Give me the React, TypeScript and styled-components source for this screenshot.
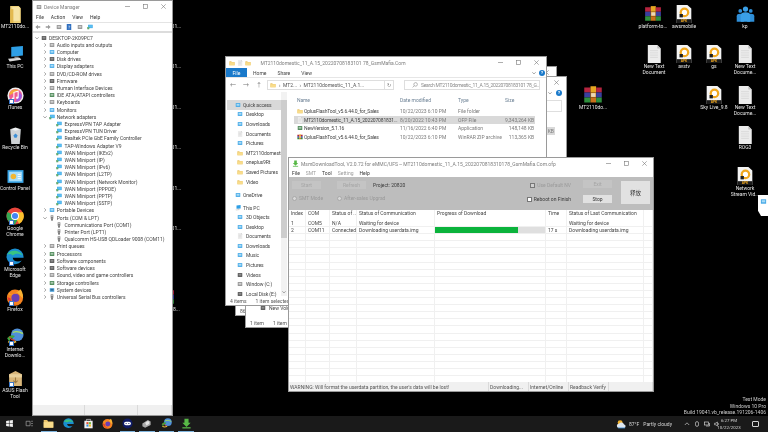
import React from "react";
import styled, { createGlobalStyle } from "styled-components";

const Global = createGlobalStyle`
  html, body { margin: 0; padding: 0; background: #000; }
  #root { width: 768px; height: 432px; overflow: hidden; }
  * { box-sizing: border-box; }
`;

const FONT = `Roboto, "Noto Sans CJK SC", Arial, sans-serif`;

const Desktop = styled.div`
  position: relative;
  width: 768px;
  height: 432px;
  background: #000;
  overflow: hidden;
  font-family: ${FONT};
  font-size: 5px;
  line-height: 6px;
  color: #3a3a3a;
  filter: blur(0.42px);
`;

/* ---------- icons ---------- */
type P = { s?: number };
const Svg: React.FC<React.PropsWithChildren<P>> = ({ s = 16, children }) => (
  <svg width={s} height={s} viewBox="0 0 16 16" style={{ display: "block", flex: "none" }}>{children}</svg>
);
const Folder = ({ s }: P) => (
  <Svg s={s}><path d="M1 3h5l1.5 2H15v9H1z" fill="#e9c46a" /><path d="M1 6h14v8H1z" fill="#f8dc8b" /></Svg>
);
const TallFolder = ({ s }: P) => (
  <Svg s={s}><path d="M3 0h8l2 2v14H3z" fill="#efd27a" /><path d="M5 1h7v13H5z" fill="#f6e3a4" /><path d="M3 3h3v13H3z" fill="#e3b94f" /></Svg>
);
const Doc = ({ s }: P) => (
  <Svg s={s}><path d="M2.5 0H11l3 3v13H2.5z" fill="#ececec" /><path d="M11 0v3h3z" fill="#bdbdbd" /><path d="M4.5 5h7M4.5 7h7M4.5 9h7M4.5 11h7" stroke="#d2d2d2" strokeWidth=".6" /></Svg>
);
const Apk = ({ s }: P) => (
  <Svg s={s}>
    <path d="M1.5 0H11l3.5 3v13H1.5z" fill="#f4f4f4" />
    <rect x="1.5" y="12.6" width="13" height="3.4" fill="#1b1b1b" />
    <text x="8" y="15.4" fontSize="2.8" fontWeight="700" fill="#f2a81d" textAnchor="middle" fontFamily="Liberation Sans">APK</text>
    <circle cx="8.4" cy="6.6" r="4.3" fill="#f2a81d" />
    <circle cx="8.4" cy="6.6" r="2.3" fill="#fff" />
    <rect x="4" y="8" width="3" height="3" fill="#222" />
  </Svg>
);
const Rar = ({ s }: P) => (
  <Svg s={s}>
    <rect x="1" y="2" width="5" height="4" fill="#b5243f" /><rect x="6" y="1" width="4.5" height="5" fill="#e6a722" /><rect x="10.5" y="2" width="4.5" height="4" fill="#b5243f" />
    <rect x="1" y="6" width="5" height="4" fill="#3a3f9e" /><rect x="6" y="6" width="4.5" height="4" fill="#e08a20" /><rect x="10.5" y="6" width="4.5" height="4" fill="#3a3f9e" />
    <rect x="1" y="10" width="5" height="4" fill="#2f8f3d" /><rect x="6" y="10" width="4.5" height="4" fill="#c9701a" /><rect x="10.5" y="10" width="4.5" height="4" fill="#2f8f3d" />
    <rect x="6.5" y="6.5" width="3.5" height="3" fill="#e8d9b8" />
  </Svg>
);
const People = ({ s }: P) => (
  <Svg s={s}>
    <circle cx="3.6" cy="5" r="1.6" fill="#2f8fd8" /><circle cx="12.4" cy="5" r="1.6" fill="#2f8fd8" /><circle cx="8" cy="3.4" r="2.2" fill="#3aa0e8" />
    <path d="M.6 14V9.4q0-2 3-2t3 2V14z" fill="#2f8fd8" /><path d="M9.4 14V9.4q0-2 3-2t3 2V14z" fill="#2f8fd8" /><path d="M4 14V8.6q0-2.5 4-2.5t4 2.5V14z" fill="#3aa0e8" />
  </Svg>
);
const ThisPc = ({ s }: P) => (
  <Svg s={s}><path d="M4 1l11-1v9L4 10z" fill="#2e9fe6" /><path d="M1 12l11-1 1.5 2-11 1.5z" fill="#d9d9d9" /><path d="M7 10h4v1.2H7z" fill="#9a9a9a" /></Svg>
);
const Shortcut = styled.span`
  position: absolute;
  left: 3px;
  top: 13px;
  width: 5px;
  height: 5px;
  background: #fff;
  border: 1px solid #3c78c8;
`;
const ITunes = ({ s }: P) => (
  <Svg s={s}><circle cx="8" cy="8" r="7.6" fill="#f0f0f0" /><circle cx="8" cy="8" r="6.2" fill="#ef5d92" /><path d="M2 8a6 6 0 0 1 6-6l3 1z" fill="#f4a93b" /><path d="M8 14a6 6 0 0 0 6-6l-2-3z" fill="#9c5be0" /><path d="M6.5 11V5l4-1v6" stroke="#fff" strokeWidth="1" fill="none" /><circle cx="5.6" cy="11" r="1.1" fill="#fff" /><circle cx="9.6" cy="10" r="1.1" fill="#fff" /></Svg>
);
const Bin = ({ s }: P) => (
  <Svg s={s}><path d="M3 2h10l-1 14H4z" fill="#cfd3d6" /><path d="M3 2l5 1.5L13 2 8 .5z" fill="#eef0f1" /><path d="M6 8l2-2 2 2-1 2H7z" fill="#3d8fd6" /></Svg>
);
const Panel = ({ s }: P) => (
  <Svg s={s}><rect x=".5" y="2" width="15" height="12" fill="#3aa6e8" /><rect x="2" y="3.5" width="12" height="9" fill="#a6dcf7" /><circle cx="6" cy="8" r="2.6" fill="#f2b630" /><path d="M10 6h3M10 8h3M10 10h3" stroke="#fff" strokeWidth=".8" /></Svg>
);
const Chrome = ({ s }: P) => (
  <Svg s={s}><circle cx="8" cy="8" r="7.6" fill="#e8453c" /><path d="M8 8L1.4 4.4A7.6 7.6 0 0 0 8 15.6L11.5 9z" fill="#34a853" /><path d="M8 8l3.6 7A7.6 7.6 0 0 0 15 4.6H8z" fill="#fbc02d" /><circle cx="8" cy="8" r="3.5" fill="#fff" /><circle cx="8" cy="8" r="2.7" fill="#4285f4" /></Svg>
);
const Edge = ({ s }: P) => (
  <Svg s={s}><path d="M8 .4a7.6 7.6 0 0 1 7.6 8.2H6c0 2.8 4 4.4 8 2.6a7.6 7.6 0 0 1-13.6-3A7.6 7.6 0 0 1 8 .4z" fill="#1a8fd0" /><path d="M1 6C2.5 1.5 12 .6 14.8 6.6c-3-2-7-2-8.6 0C4 5 2.5 5 1 6z" fill="#39c481" /></Svg>
);
const Firefox = ({ s }: P) => (
  <Svg s={s}><circle cx="8" cy="8.6" r="7.2" fill="#f5821f" /><path d="M2 4c1 4 4 1 6 1l5-4c2 3 2.5 6 1.8 8L10 4 6 7z" fill="#f9b233" /><circle cx="8.4" cy="8.8" r="3.6" fill="#6a3fb5" /><path d="M1 8q2 7 8 7-5-2-5-6z" fill="#e6382f" /></Svg>
);
const Idm = ({ s }: P) => (
  <Svg s={s}><circle cx="10" cy="6" r="5.6" fill="#4f8fd8" /><path d="M6 4q4-2 9 1" stroke="#a8e060" strokeWidth="1.2" fill="none" /><path d="M1 9q3-4 7-2L6 9q-2-.4-3 3z" fill="#3ca63c" /><path d="M2 12q3 2 7 0" stroke="#e6b93a" strokeWidth="1.6" fill="none" /><path d="M3 8q2 3 5 3" stroke="#d83a2e" strokeWidth="1" fill="none" /></Svg>
);
const Box = ({ s }: P) => (
  <Svg s={s}><path d="M2 4l6-3 6 3v11H2z" fill="#d9b67a" /><path d="M2 4h12v3H2z" fill="#e9d09c" /><path d="M8 7v5M6 10l2 2 2-2" stroke="#9a7a44" strokeWidth="1" fill="none" /></Svg>
);
const GreenDown = ({ s }: P) => (
  <Svg s={s}><path d="M5 1h6v6h3l-6 6-6-6h3z" fill="#58b947" /><rect x="2" y="13.4" width="12" height="1.8" fill="#58b947" /></Svg>
);
const Win = ({ s }: P) => (
  <Svg s={s}><path d="M2 3.6l5-.8v4.7H2zM8 2.6l6-.9v5.8H8zM2 8.5h5v4.7l-5-.8zM8 8.5h6v5.8l-6-.9z" fill="#f2f2f2" /></Svg>
);
const TaskView = ({ s }: P) => (
  <Svg s={s}><path d="M2 4h7v8H2zM11 4h3M11 8h3M11 12h3" stroke="#b5b5b5" fill="none" strokeWidth="1.1" /></Svg>
);
const Store = ({ s }: P) => (
  <Svg s={s}><path d="M2 4h12v11H2z" fill="#f0f0f0" /><path d="M5 4V2h6v2" stroke="#ddd" fill="none" /><rect x="5" y="6" width="3" height="3" fill="#e6492e" /><rect x="8.5" y="6" width="3" height="3" fill="#6fb83a" /><rect x="5" y="9.5" width="3" height="3" fill="#2c8fe0" /><rect x="8.5" y="9.5" width="3" height="3" fill="#f4b81e" /></Svg>
);
const Chat = ({ s }: P) => (
  <Svg s={s}><circle cx="8" cy="8" r="7.4" fill="#101c66" /><rect x="3" y="5.4" width="10" height="5.2" rx="2.6" fill="#fff" /><circle cx="6" cy="8" r=".9" fill="#101c66" /><circle cx="10" cy="8" r=".9" fill="#101c66" /></Svg>
);
const Flash = ({ s }: P) => (
  <Svg s={s}><path d="M2 8l8-5 4 2v5l-8 4-4-2z" fill="#a9a9a9" /><path d="M6 7l4-2.5 2 1v3L8 11z" fill="#e5e5e5" /></Svg>
);
const Weather = ({ s }: P) => (
  <Svg s={s}><circle cx="6" cy="5.5" r="3.6" fill="#f3b32d" /><path d="M4 13a3 3 0 0 1 .4-6 4 4 0 0 1 7.4 1 2.6 2.6 0 0 1 .4 5z" fill="#dfe6ee" /><path d="M3 13h10" stroke="#3d8fd6" strokeWidth="1.2" /></Svg>
);
const Mon = ({ s }: P) => (
  <Svg s={s}><rect x="3" y="2" width="12" height="9" fill="#2f9fe2" /><rect x="4" y="3" width="10" height="7" fill="#5cc0f2" /><rect x="1" y="8" width="5" height="6" fill="#3a8a4a" /><rect x="2" y="9" width="3" height="3" fill="#8ed6a0" /></Svg>
);
const PortPlug = ({ s }: P) => (
  <Svg s={s}><rect x="4.5" y="1" width="7" height="9" fill="#7b7b7b" /><rect x="6" y="2.5" width="4" height="3" fill="#cfcfcf" /><rect x="6" y="10" width="4" height="5" fill="#555" /></Svg>
);
const Arrow = ({ s, back }: P & { back?: boolean }) => (
  <Svg s={s}><path d={back ? "M14 6v4H8v4L1 8l7-6v4z" : "M2 6v4h6v4l7-6-7-6v4z"} fill="#9a9a9a" /></Svg>
);
const HelpBook = ({ s }: P) => (
  <Svg s={s}><rect x="2" y="0" width="12" height="16" fill="#2f6fc0" /><path d="M8 11V9q3-1 2-3.5-2-1.5-4 .5M8 12v2" stroke="#fff" strokeWidth="1.3" fill="none" /></Svg>
);
const DevGlyph: React.FC<P & { k: string }> = ({ k, s }) => {
  if (k === "net") return <Mon s={s} />;
  if (k === "port") return <PortPlug s={s} />;
  const c: Record<string, [string, string]> = {
    blue: ["#3fa6e6", "#a8dbf6"], dark: ["#4e4e4e", "#8c8c8c"], grey: ["#8b8b8b", "#cfcfcf"], green: ["#3f7f4a", "#a9c9ae"], folder: ["#5aa7dc", "#2f6f9c"],
  };
  const [a, b] = c[k] || c.grey;
  return <Svg s={s}><rect x="2" y="3" width="12" height="10" fill={a} /><rect x="4" y="5" width="8" height="5" fill={b} /></Svg>;
};

/* ---------- desktop icons ---------- */
const IconSlot = styled.div<{ $cx: number; $y: number }>`
  position: absolute;
  left: ${(p) => p.$cx - 20}px;
  top: ${(p) => p.$y}px;
  width: 40px;
  display: flex;
  flex-direction: column;
  align-items: center;
`;
const IconImage = styled.div`
  position: relative;
  width: 18px;
  height: 18px;
  display: flex;
  justify-content: center;
  align-items: center;
`;
const IconLabel = styled.div`
  color: #e8e8e8;
  font-size: 5px;
  line-height: 6px;
  text-align: center;
  white-space: pre-line;
`;
type DI = { cx: number; y: number; g: React.ReactNode; label: string; sc?: boolean };
const D: DI[] = [
  { cx: 15, y: 5, g: <TallFolder s={17} />, label: "MT2110do..." },
  { cx: 15, y: 45, g: <ThisPc s={17} />, label: "This PC" },
  { cx: 15, y: 86, g: <ITunes s={17} />, label: "iTunes", sc: true },
  { cx: 15, y: 126, g: <Bin s={17} />, label: "Recycle Bin" },
  { cx: 15, y: 167, g: <Panel s={17} />, label: "Control Panel" },
  { cx: 15, y: 207, g: <Chrome s={18} />, label: "Google\nChrome", sc: true },
  { cx: 15, y: 248, g: <Edge s={18} />, label: "Microsoft\nEdge", sc: true },
  { cx: 15, y: 288, g: <Firefox s={18} />, label: "Firefox", sc: true },
  { cx: 15, y: 328, g: <Idm s={18} />, label: "Internet\nDownlo...", sc: true },
  { cx: 15, y: 369, g: <Box s={17} />, label: "ASUS Flash\nTool", sc: true },
  { cx: 653, y: 5, g: <Rar s={18} />, label: "platform-to..." },
  { cx: 684, y: 5, g: <Apk s={18} />, label: "awsmobile" },
  { cx: 745, y: 5, g: <People s={19} />, label: "kp" },
  { cx: 654, y: 45, g: <Doc s={18} />, label: "New Text\nDocument" },
  { cx: 684, y: 45, g: <Apk s={18} />, label: "avstv" },
  { cx: 714, y: 45, g: <Apk s={18} />, label: "gs" },
  { cx: 745, y: 45, g: <Doc s={18} />, label: "New Text\nDocume..." },
  { cx: 714, y: 86, g: <Apk s={18} />, label: "Sky Live_9.8" },
  { cx: 745, y: 86, g: <Doc s={18} />, label: "New Text\nDocume..." },
  { cx: 745, y: 126, g: <Doc s={18} />, label: "ROG3" },
  { cx: 745, y: 167, g: <Apk s={18} />, label: "Network\nStream Vid..." },
  { cx: 593, y: 86, g: <Rar s={20} />, label: "MT2110do..." },
  ...[5, 45, 86, 126, 167, 207].map((y) => ({ cx: 166, y, g: <ThisPc s={16} />, label: "MT2110_01..." })),
  { cx: 166, y: 288, g: <Rar s={18} />, label: "MT2110_8..." },
];

/* ---------- window shell ---------- */
const Win95 = styled.section<{ $x: number; $y: number; $w: number; $h: number }>`
  position: absolute;
  left: ${(p) => p.$x}px;
  top: ${(p) => p.$y}px;
  width: ${(p) => p.$w}px;
  height: ${(p) => p.$h}px;
  background: #fff;
  border: 1px solid #9a9a9a;
  display: flex;
  flex-direction: column;
  overflow: hidden;
`;
const TitleBar = styled.header<{ $h: number }>`
  flex: none;
  height: ${(p) => p.$h}px;
  display: flex;
  align-items: center;
  padding-left: 3px;
  gap: 2px;
  color: #7d7d7d;
  white-space: nowrap;
`;
const Controls = styled.div<{ $gap: number; $pr: number }>`
  margin-left: auto;
  display: flex;
  gap: ${(p) => p.$gap}px;
  padding-right: ${(p) => p.$pr}px;
  align-items: center;
`;
const Ctl = styled.svg`
  width: 5px;
  height: 5px;
  display: block;
  stroke: #777;
  stroke-width: 0.6;
  fill: none;
`;
const WinControls = ({ gap, pr }: { gap: number; pr: number }) => (
  <Controls $gap={gap} $pr={pr}>
    <Ctl viewBox="0 0 5 5"><path d="M0 2.5h5" /></Ctl>
    <Ctl viewBox="0 0 5 5"><rect x=".5" y=".5" width="4" height="4" /></Ctl>
    <Ctl viewBox="0 0 5 5"><path d="M.3.3l4.4 4.4M4.7.3L.3 4.7" /></Ctl>
  </Controls>
);

/* ---------- device manager ---------- */
const Menu = styled.nav<{ $h: number; $gap: number; $pl: number }>`
  flex: none;
  height: ${(p) => p.$h}px;
  display: flex;
  align-items: center;
  gap: ${(p) => p.$gap}px;
  padding-left: ${(p) => p.$pl}px;
  color: #333;
`;
const MenuItem = styled.span<{ $off?: boolean }>`
  color: ${(p) => (p.$off ? "#9c9c9c" : "#333")};
`;
const DmToolbar = styled.div`
  flex: none;
  height: 9px;
  display: flex;
  align-items: center;
  gap: 4.4px;
  padding-left: 2px;
  border-top: 1px solid #e4e4e4;
`;
const Strip = styled.div`
  flex: none;
  height: 2px;
  background: #dcdcdc;
`;
const Tree = styled.div`
  flex: 1;
  padding-top: 1px;
`;
const TreeRow = styled.div<{ $depth: number }>`
  height: 7.21px;
  display: flex;
  align-items: center;
  gap: 2px;
  padding-left: ${(p) => 2 + p.$depth * 7.7}px;
  color: #444;
  white-space: nowrap;
`;
const Chevron = styled.svg`
  width: 4px;
  height: 4px;
  flex: none;
  stroke: #8a8a8a;
  stroke-width: 0.7;
  fill: none;
`;
const ChevSlot = styled.span`
  width: 4px;
  flex: none;
`;
const StatusBar = styled.footer<{ $cols: string; $h: number }>`
  flex: none;
  height: ${(p) => p.$h}px;
  background: #f0f0f0;
  display: grid;
  grid-template-columns: ${(p) => p.$cols};
  align-items: center;
  white-space: nowrap;
  color: #555;
`;
const StatusCell = styled.span`
  height: 100%;
  display: flex;
  align-items: center;
  padding-left: 1px;
  border-right: 1px solid #dadada;
  overflow: hidden;
`;

type Node = { t: string; d: number; k: string; o?: boolean };
const cat = (t: string, k: string, o?: boolean): Node => ({ t, d: 1, k, o });
const leaf = (t: string, k = "net"): Node => ({ t, d: 2, k });
const TREE: Node[] = [
  { t: "DESKTOP-2K09PC7", d: 0, k: "dark", o: true },
  cat("Audio inputs and outputs", "grey"), cat("Computer", "blue"), cat("Disk drives", "dark"), cat("Display adapters", "blue"),
  cat("DVD/CD-ROM drives", "grey"), cat("Firmware", "dark"), cat("Human Interface Devices", "grey"), cat("IDE ATA/ATAPI controllers", "green"),
  cat("Keyboards", "grey"), cat("Monitors", "blue"), cat("Network adapters", "net", true),
  leaf("ExpressVPN TAP Adapter"), leaf("ExpressVPN TUN Driver"), leaf("Realtek PCIe GbE Family Controller"), leaf("TAP-Windows Adapter V9"),
  leaf("WAN Miniport (IKEv2)"), leaf("WAN Miniport (IP)"), leaf("WAN Miniport (IPv6)"), leaf("WAN Miniport (L2TP)"),
  leaf("WAN Miniport (Network Monitor)"), leaf("WAN Miniport (PPPOE)"), leaf("WAN Miniport (PPTP)"), leaf("WAN Miniport (SSTP)"),
  cat("Portable Devices", "blue"), cat("Ports (COM & LPT)", "port", true),
  leaf("Communications Port (COM1)", "port"), leaf("Printer Port (LPT1)", "port"), leaf("Qualcomm HS-USB QDLoader 9008 (COM11)", "port"),
  cat("Print queues", "grey"), cat("Processors", "green"), cat("Software components", "dark"), cat("Software devices", "dark"),
  cat("Sound, video and game controllers", "grey"), cat("Storage controllers", "green"), cat("System devices", "folder"), cat("Universal Serial Bus controllers", "port"),
];

const DeviceManager = () => (
  <Win95 $x={32} $y={0} $w={141} $h={416}>
    <TitleBar $h={11}>
      <DevGlyph k="grey" s={6} />
      <span>Device Manager</span>
      <WinControls gap={13} pr={6} />
    </TitleBar>
    <Menu $h={10} $gap={7} $pl={3}>
      <MenuItem>File</MenuItem><MenuItem>Action</MenuItem><MenuItem>View</MenuItem><MenuItem>Help</MenuItem>
    </Menu>
    <DmToolbar>
      <Arrow s={6} back /><Arrow s={6} /><DevGlyph k="grey" s={6} /><HelpBook s={6} /><DevGlyph k="grey" s={6} /><DevGlyph k="net" s={6} />
    </DmToolbar>
    <Strip />
    <Tree>
      {TREE.map((n, i) => (
        <TreeRow key={i} $depth={n.d}>
          {n.d < 2 ? (
            <Chevron viewBox="0 0 4 4">{n.o ? <path d="M.3 1.2L2 3l1.7-1.8" /> : <path d="M1.2.3L3 2 1.2 3.7" />}</Chevron>
          ) : <ChevSlot />}
          <DevGlyph k={n.k} s={6} />
          <span>{n.t}</span>
        </TreeRow>
      ))}
    </Tree>
    <StatusBar $h={10} $cols="52px 53px 1fr"><StatusCell /><StatusCell /><StatusCell /></StatusBar>
  </Win95>
);

/* ---------- explorer ---------- */
const FileTab = styled.span`
  width: 21px;
  height: 100%;
  background: #1979ca;
  color: #fff;
  display: flex;
  align-items: center;
  justify-content: center;
`;
const Ribbon = styled.div`
  flex: none;
  height: 10px;
  display: flex;
  align-items: center;
  gap: 6px;
  color: #444;
  border-bottom: 1px solid #e6e6e6;
`;
const Tabs = styled.div`
  display: flex;
  gap: 11px;
`;
const HelpDot = styled.span`
  width: 6px;
  height: 6px;
  border-radius: 50%;
  background: #1979ca;
  color: #fff;
  font-size: 4px;
  line-height: 6px;
  text-align: center;
  font-weight: 700;
`;
const RibbonEnd = styled.div`
  margin-left: auto;
  display: flex;
  align-items: center;
  gap: 3px;
  padding-right: 1px;
`;
const AddressRow = styled.div`
  flex: none;
  height: 14px;
  display: flex;
  align-items: center;
  gap: 10px;
  padding: 0 4px 0 4px;
`;
const NavArrows = styled.div`
  display: flex;
  gap: 7px;
  color: #777;
  width: 32px;
  margin-right: -1px;
  font-size: 6px;
`;
const AddressBox = styled.div`
  width: 127px;
  height: 10px;
  margin-left: -4px;
  border: 1px solid #dedede;
  display: flex;
  align-items: center;
  gap: 3px;
  padding-left: 2px;
  color: #555;
  white-space: nowrap;
  overflow: hidden;
`;
const Refresh = styled.span`
  margin-left: auto;
  height: 100%;
  width: 9px;
  border-left: 1px solid #dedede;
  text-align: center;
  line-height: 8px;
  color: #777;
`;
const SearchBox = styled.div`
  width: 136px;
  height: 10px;
  border: 1px solid #dedede;
  display: flex;
  align-items: center;
  gap: 3px;
  padding-left: 7px;
  color: #8a8a8a;
  white-space: nowrap;
  overflow: hidden;
  letter-spacing: -0.3px;
`;
const ExBody = styled.div`
  flex: 1;
  display: flex;
  min-height: 0;
`;
const NavPane = styled.div`
  width: 55px;
  flex: none;
  padding-top: 8px;
  padding-left: 1px;
`;
const NavRow = styled.div<{ $top?: boolean; $sel?: boolean; $mt?: number }>`
  height: 9.6px;
  margin-top: ${(p) => p.$mt ?? 0}px;
  display: flex;
  align-items: center;
  gap: ${(p) => (p.$top ? 2 : 3)}px;
  padding-left: ${(p) => (p.$top ? 8 : 10)}px;
  background: ${(p) => (p.$sel ? "#d9d9d9" : "transparent")};
  color: #444;
  white-space: nowrap;
  letter-spacing: -0.08px;
`;
const ScrollTrack = styled.div`
  width: 6px;
  flex: none;
  padding-top: 8px;
  background: #f2f2f2;
  display: flex;
  flex-direction: column;
  align-items: center;
`;
const ScrollThumb = styled.div`
  width: 100%;
  height: 138px;
  background: #cdcdcd;
`;
const ScrollEnd = styled.div`
  margin-top: auto;
  margin-bottom: 1px;
`;
const FileList = styled.div`
  flex: 1;
  padding: 4px 12px 0 7px;
`;
const FileGrid = styled.div<{ $sel?: boolean; $head?: boolean }>`
  display: grid;
  grid-template-columns: 106px 58px 47px 1fr;
  height: ${(p) => (p.$head ? 7 : 8.6)}px;
  margin-bottom: ${(p) => (p.$head ? 4 : 0)}px;
  align-items: center;
  background: ${(p) => (p.$sel ? "#d9d9d9" : "transparent")};
  white-space: nowrap;
`;
const NameCell = styled.span`
  display: flex;
  align-items: center;
  gap: 1px;
  padding-left: 3px;
  color: #444;
  letter-spacing: -0.16px;
`;
const Muted = styled.span<{ $end?: boolean }>`
  color: #7b7b7b;
  text-align: ${(p) => (p.$end ? "right" : "left")};
  padding-right: ${(p) => (p.$end ? 1 : 0)}px;
`;
const Head = styled.span`
  color: #6a7f93;
`;
const ExStatus = styled.footer<{ $mt?: number }>`
  flex: none;
  height: 9px;
  margin-top: ${(p) => p.$mt ?? 0}px;
  display: flex;
  align-items: center;
  gap: 9px;
  padding-left: 4px;
  color: #555;
`;

const NAV: { t: string; g: React.ReactNode; top?: boolean; sel?: boolean; mt?: number }[] = [
  { t: "Quick access", g: <DevGlyph k="blue" s={6} />, sel: true },
  { t: "Desktop", g: <DevGlyph k="blue" s={6} /> },
  { t: "Downloads", g: <DevGlyph k="blue" s={6} /> },
  { t: "Documents", g: <Doc s={6} /> },
  { t: "Pictures", g: <DevGlyph k="blue" s={6} /> },
  { t: "MT2110domesti", g: <Folder s={6} /> },
  { t: "oneplus9Rt", g: <Folder s={6} /> },
  { t: "Saved Pictures", g: <Folder s={6} /> },
  { t: "Video", g: <Folder s={6} /> },
  { t: "OneDrive", g: <DevGlyph k="blue" s={6} />, top: true, mt: 3.4 },
  { t: "This PC", g: <ThisPc s={6} />, top: true, mt: 3.4 },
  { t: "3D Objects", g: <DevGlyph k="blue" s={6} /> },
  { t: "Desktop", g: <DevGlyph k="blue" s={6} /> },
  { t: "Documents", g: <Doc s={6} /> },
  { t: "Downloads", g: <DevGlyph k="blue" s={6} /> },
  { t: "Music", g: <DevGlyph k="blue" s={6} /> },
  { t: "Pictures", g: <DevGlyph k="blue" s={6} /> },
  { t: "Videos", g: <DevGlyph k="dark" s={6} /> },
  { t: "Window (C:)", g: <DevGlyph k="grey" s={6} /> },
  { t: "Local Disk (E:)", g: <DevGlyph k="dark" s={6} /> },
];
const FILES: { n: string; d: string; t: string; s: string; g: React.ReactNode; sel?: boolean }[] = [
  { n: "OplusFlashTool_v5.6.44.0_for_Sales", d: "10/22/2023 6:10 PM", t: "File folder", s: "", g: <Folder s={6} /> },
  { n: "MT2110domestic_11_A.15_202207081831...", d: "8/20/2022 10:43 PM", t: "OFP File", s: "9,343,264 KB", g: <Doc s={6} />, sel: true },
  { n: "NewVersion_5.1.16", d: "11/16/2022 6:40 PM", t: "Application", s: "148,148 KB", g: <DevGlyph k="green" s={6} /> },
  { n: "OplusFlashTool_v5.6.44.0_for_Sales", d: "10/22/2023 6:10 PM", t: "WinRAR ZIP archive", s: "113,365 KB", g: <Rar s={6} /> },
];

const Explorer = () => (
  <Win95 $x={225} $y={56} $w={322} $h={250}>
    <TitleBar $h={11}>
      <Folder s={6} /><Doc s={6} /><Folder s={6} />
      <span>&nbsp;&nbsp;&nbsp;&nbsp;&nbsp;&nbsp;MT2110domestic_11_A.15_20220708183101 78_GsmMafia.Com</span>
      <WinControls gap={13} pr={7} />
    </TitleBar>
    <Ribbon>
      <FileTab>File</FileTab>
      <Tabs><span>Home</span><span>Share</span><span>View</span></Tabs>
      <RibbonEnd><Chevron viewBox="0 0 4 4"><path d="M.3 1.2L2 3l1.7-1.8" /></Chevron><HelpDot>?</HelpDot></RibbonEnd>
    </Ribbon>
    <AddressRow>
      <NavArrows><span>←</span><span>→</span><span>↑</span></NavArrows>
      <AddressBox>
        <Folder s={6} /><span>›&nbsp;&nbsp;MT2...&nbsp;&nbsp;›&nbsp;&nbsp;MT2110domestic_11_A.1...</span>
        <Refresh>↻</Refresh>
      </AddressBox>
      <SearchBox><Mini viewBox="0 0 6 6"><circle cx="3.6" cy="2.4" r="1.8" /><path d="M2.2 3.8L.6 5.4" /></Mini><span>Search MT2110domestic_11_A.15_20220708183101 78_G...</span></SearchBox>
    </AddressRow>
    <ExBody>
      <NavPane>
        {NAV.map((r, i) => (
          <NavRow key={i} $top={r.top || i === 0} $sel={r.sel} $mt={r.mt}>{r.g}<span>{r.t}</span></NavRow>
        ))}
      </NavPane>
      <ScrollTrack>
        <ScrollThumb />
        <ScrollEnd><Chevron viewBox="0 0 4 4"><path d="M.3 1.2L2 3l1.7-1.8" /></Chevron></ScrollEnd>
      </ScrollTrack>
      <FileList>
        <FileGrid $head><NameCell><Head>Name</Head></NameCell><Head>Date modified</Head><Head>Type</Head><Head>Size</Head></FileGrid>
        {FILES.map((f) => (
          <FileGrid key={f.n + f.t} $sel={f.sel}>
            <NameCell>{f.g}<span>{f.n}</span></NameCell>
            <Muted>{f.d}</Muted><Muted>{f.t}</Muted><Muted $end>{f.s}</Muted>
          </FileGrid>
        ))}
      </FileList>
    </ExBody>
    <ExStatus><span>4 items</span><span>1 item selected</span></ExStatus>
  </Win95>
);

const BackBody = styled.div`
  flex: 1;
  display: flex;
  flex-direction: column;
  align-items: flex-end;
  padding-right: 4px;
`;
const BackClose = styled.div`
  height: 11px;
  display: flex;
  align-items: center;
  padding-right: 3px;
`;
const BackRibbon = styled.div`
  height: 10px;
  display: flex;
  align-items: center;
  gap: 4px;
`;
const BackSearch = styled.div`
  width: 136px;
  height: 12px;
  margin-top: 2px;
  border: 1px solid #dedede;
`;
const BackSize = styled.div`
  margin-top: 15px;
  margin-right: 7px;
  height: 8px;
  padding: 0 1px;
  background: #d9d9d9;
  color: #7b7b7b;
  line-height: 8px;
`;
const BackRow = styled.div`
  display: flex;
  align-items: center;
  gap: 3px;
  padding-left: 14px;
  height: 8px;
  color: #444;
  white-space: nowrap;
`;
const CloseX = () => (
  <Ctl viewBox="0 0 5 5"><path d="M.3.3l4.4 4.4M4.7.3L.3 4.7" /></Ctl>
);

const BackSecond = () => (
  <Win95 $x={235} $y={66} $w={322} $h={250}>
    <BackBody><BackClose><CloseX /></BackClose></BackBody>
    <ExStatus><span>86 items</span></ExStatus>
  </Win95>
);
const BackThird = () => (
  <Win95 $x={245} $y={76} $w={322} $h={252}>
    <BackBody>
      <BackClose><CloseX /></BackClose>
      <BackRibbon><Chevron viewBox="0 0 4 4"><path d="M.3 1.2L2 3l1.7-1.8" /></Chevron><HelpDot>?</HelpDot></BackRibbon>
      <BackSearch />
      <BackSize>KB</BackSize>
    </BackBody>
    <BackRow><DevGlyph k="dark" s={6} /><span>New Volume (E:)</span></BackRow>
    <ExStatus $mt={6}><span>1 item</span><span>1 item selected</span></ExStatus>
  </Win95>
);

/* ---------- MSM tool ---------- */
const MsmPanel = styled.div`
  flex: none;
  height: 33px;
  background: #bdbdbd;
  display: flex;
  justify-content: space-between;
  padding: 4px 3px 4px 3px;
`;
const LeftCol = styled.div`
  display: flex;
  flex-direction: column;
  gap: 6px;
`;
const Row = styled.div<{ $gap: number }>`
  display: flex;
  align-items: center;
  gap: ${(p) => p.$gap}px;
  white-space: nowrap;
`;
const PanelBtn = styled.button<{ $w: number; $off?: boolean }>`
  width: ${(p) => p.$w}px;
  height: 8px;
  padding: 0;
  border: 0;
  font: inherit;
  background: ${(p) => (p.$off ? "#c4c4c4" : "#e1e1e1")};
  color: ${(p) => (p.$off ? "#a5a5a5" : "#333")};
`;
const BigBtn = styled.button`
  width: 29px;
  height: 23px;
  padding: 0;
  border: 0;
  font: inherit;
  font-size: 5.5px;
  background: #e1e1e1;
  color: #333;
`;
const Radio = styled.span`
  width: 5px;
  height: 5px;
  border-radius: 50%;
  background: #d8d8d8;
  border: 1px solid #a8a8a8;
  flex: none;
`;
const Check = styled.span<{ $on: boolean }>`
  width: 5px;
  height: 5px;
  flex: none;
  border: 0.6px solid #777;
  background: ${(p) => (p.$on ? "#fff" : "#d0d0d0")};
`;
const Faded = styled.span`
  color: #9a9a9a;
`;
const RightGroup = styled.div`
  display: flex;
  gap: 9px;
`;
const OptionCol = styled.div`
  display: flex;
  flex-direction: column;
  align-items: flex-end;
  gap: 8px;
  padding-top: 1px;
  margin-right: 3px;
`;
const BtnCol = styled.div`
  display: flex;
  flex-direction: column;
  gap: 7px;
  margin-top: -1px;
`;
const COLS = "17px 24px 27px 78px 111px 21px 77px 1fr";
const GridHead = styled.div`
  flex: none;
  height: 10px;
  display: grid;
  grid-template-columns: ${COLS};
  align-items: center;
  white-space: nowrap;
`;
const GridArea = styled.div`
  flex: 1;
  min-height: 0;
  overflow: hidden;
  display: flex;
  flex-direction: column;
`;
const GridRow = styled.div`
  flex: none;
  height: 7.1px;
  display: grid;
  grid-template-columns: ${COLS};
  border-bottom: 0.5px solid #f0f0f0;
  white-space: nowrap;
`;
const Cell = styled.div`
  padding-left: 2px;
  height: 100%;
  line-height: 7px;
  color: #444;
  border-right: 0.5px solid #f0f0f0;
  overflow: hidden;
`;
const BarTrack = styled.div`
  height: 100%;
  background: #dfdfdf;
  border-right: 0.5px solid #ececec;
`;
const BarFill = styled.div`
  height: 100%;
  background: #0bb33c;
`;

const ROWS: { c: string[]; pct?: number }[] = [
  { c: ["1", "COM5", "N/A", "Waiting for device", "", "", "Waiting for device", ""] },
  { c: ["2", "COM11", "Connected", "Downloading userdata.img", "", "17 s", "Downloading userdata.img", ""], pct: 75.5 },
  ...Array.from({ length: 22 }, () => ({ c: ["", "", "", "", "", "", "", ""] })),
];

const Msm = () => (
  <Win95 $x={288} $y={157} $w={366} $h={235}>
    <TitleBar $h={11}>
      <GreenDown s={7} />
      <span>MsmDownloadTool, V2.0.72 for eMMC/UFS -- MT2110domestic_11_A.15_2022070818310178_GsmMafia.Com.ofp</span>
      <WinControls gap={13} pr={6} />
    </TitleBar>
    <Menu $h={8} $gap={6} $pl={3}>
      <MenuItem>File</MenuItem><MenuItem $off>SMT</MenuItem><MenuItem>Tool</MenuItem><MenuItem $off>Setting</MenuItem><MenuItem>Help</MenuItem>
    </Menu>
    <MsmPanel>
      <LeftCol>
        <Row $gap={16}>
          <PanelBtn $w={29} $off>Start</PanelBtn>
          <Row $gap={7}><PanelBtn $w={29} $off>Refresh</PanelBtn><span>Project: 20820</span></Row>
        </Row>
        <Row $gap={14}>
          <Row $gap={2}><Radio /><Faded>SMT Mode</Faded></Row>
          <Row $gap={2}><Radio /><Faded>After-sales Upgrad</Faded></Row>
        </Row>
      </LeftCol>
      <RightGroup>
        <OptionCol>
          <Row $gap={2}><Check $on={false} /><Faded>Use Default NV</Faded></Row>
          <Row $gap={2}><Check $on /><span>Reboot on Finish</span></Row>
        </OptionCol>
        <BtnCol><PanelBtn $w={29} $off>Exit</PanelBtn><PanelBtn $w={29}>Stop</PanelBtn></BtnCol>
        <BigBtn>释放</BigBtn>
      </RightGroup>
    </MsmPanel>
    <GridHead>
      {["Index", "COM", "Status of ...", "Status of Communication", "Progress of Download", "Time", "Status of Last Communication", ""].map((h, i) => (
        <Cell key={i}>{h}</Cell>
      ))}
    </GridHead>
    <GridArea>
      {ROWS.map((r, i) => (
        <GridRow key={i}>
          {r.c.map((t, j) =>
            j === 4 && r.pct ? (
              <BarTrack key={j}><BarFill style={{ width: `${r.pct}%` }} /></BarTrack>
            ) : (
              <Cell key={j}>{t}</Cell>
            )
          )}
        </GridRow>
      ))}
    </GridArea>
    <StatusBar $h={9} $cols="200px 40px 40px 40px 1fr">
      <StatusCell>WARNING: Will format the userdata partition, the user's data will be lost!</StatusCell>
      <StatusCell>Downloading...</StatusCell>
      <StatusCell>Internet/Online</StatusCell>
      <StatusCell>Readback Verify</StatusCell>
      <StatusCell />
    </StatusBar>
  </Win95>
);

/* ---------- taskbar ---------- */
const Watermark = styled.div`
  position: absolute;
  right: 2px;
  bottom: 16px;
  display: flex;
  flex-direction: column;
  align-items: flex-end;
  color: #cfcfcf;
  line-height: 6.6px;
  white-space: nowrap;
`;
const Taskbar = styled.footer`
  position: absolute;
  left: 0;
  bottom: 0;
  width: 768px;
  height: 16px;
  background: #1a1a1a;
  display: flex;
  align-items: stretch;
  color: #d6d6d6;
`;
const TaskBtn = styled.div<{ $on?: boolean }>`
  width: 15.6px;
  margin: 0 2px;
  display: flex;
  align-items: center;
  justify-content: center;
  border-bottom: 1px solid ${(p) => (p.$on ? "#7fb4dd" : "transparent")};
`;
const Tray = styled.div`
  margin-left: auto;
  display: flex;
  align-items: center;
  padding-right: 9px;
  white-space: nowrap;
`;
const Weathertext = styled.span`
  margin-left: 2px;
  width: 55px;
  display: flex;
  gap: 4px;
`;
const TrayIcons = styled.div`
  display: flex;
  gap: 4px;
  width: 33px;
  align-items: center;
`;
const Clock = styled.div`
  width: 24px;
  text-align: center;
  font-size: 4.4px;
  line-height: 7px;
`;
const Notify = styled.div`
  margin-left: 11px;
  width: 7px;
  height: 6px;
  border: 0.7px solid #d6d6d6;
  border-radius: 1px;
`;
const Mini = styled.svg`
  width: 6px;
  height: 6px;
  flex: none;
  stroke: #9a9a9a;
  stroke-width: 0.7;
  fill: none;
`;
const TrayGlyph = styled(Mini)`
  stroke: #cfcfcf;
`;
const TvTab = styled.div`
  position: absolute;
  left: 758px;
  top: 195px;
  width: 10px;
  height: 21px;
  background: #fff;
  clip-path: polygon(0 0, 100% 0, 100% 100%, 30% 100%, 0 75%);
  display: flex;
  justify-content: center;
  padding-top: 3px;
`;

const TASK: { g: React.ReactNode; on?: boolean }[] = [
  { g: <Win s={9} /> }, { g: <TaskView s={9} /> }, { g: <Folder s={11} />, on: true }, { g: <Edge s={11} /> }, { g: <Store s={11} /> },
  { g: <Firefox s={11} /> }, { g: <Chat s={11} />, on: true }, { g: <Flash s={11} />, on: true }, { g: <Idm s={11} />, on: true }, { g: <GreenDown s={11} />, on: true },
];

const Bar = () => (
  <Taskbar>
    {TASK.map((t, i) => <TaskBtn key={i} $on={t.on}>{t.g}</TaskBtn>)}
    <Tray>
      <Weather s={11} />
      <Weathertext><span>87°F</span><span>Partly cloudy</span></Weathertext>
      <TrayIcons>
        <TrayGlyph viewBox="0 0 6 6"><path d="M.8 4L3 1.8 5.2 4" /></TrayGlyph>
        <TrayGlyph viewBox="0 0 6 6"><rect x="1.5" y=".6" width="3" height="4.8" rx="1.5" /></TrayGlyph>
        <TrayGlyph viewBox="0 0 6 6"><rect x=".4" y="1" width="4" height="3" /><path d="M5.5 2v3H2" /></TrayGlyph>
        <TrayGlyph viewBox="0 0 6 6"><path d="M.6 2.2h1.2L3.4 1v4L1.8 3.8H.6zM4.4 2.2v1.6" /></TrayGlyph>
      </TrayIcons>
      <Clock>6:27 PM<br />10/22/2023</Clock>
      <Notify />
    </Tray>
  </Taskbar>
);

export default function App() {
  return (
    <>
      <Global />
      <Desktop>
        {D.map((d, i) => (
          <IconSlot key={i} $cx={d.cx} $y={d.y}>
            <IconImage>{d.g}{d.sc && <Shortcut />}</IconImage>
            <IconLabel>{d.label}</IconLabel>
          </IconSlot>
        ))}
        <BackSecond />
        <BackThird />
        <Explorer />
        <Msm />
        <DeviceManager />
        <Watermark>
          <span>Test Mode</span><span>Windows 10 Pro</span><span>Build 19041.vb_release.191206-1406</span>
        </Watermark>
        <TvTab><DevGlyph k="blue" s={7} /></TvTab>
        <Bar />
      </Desktop>
    </>
  );
}
